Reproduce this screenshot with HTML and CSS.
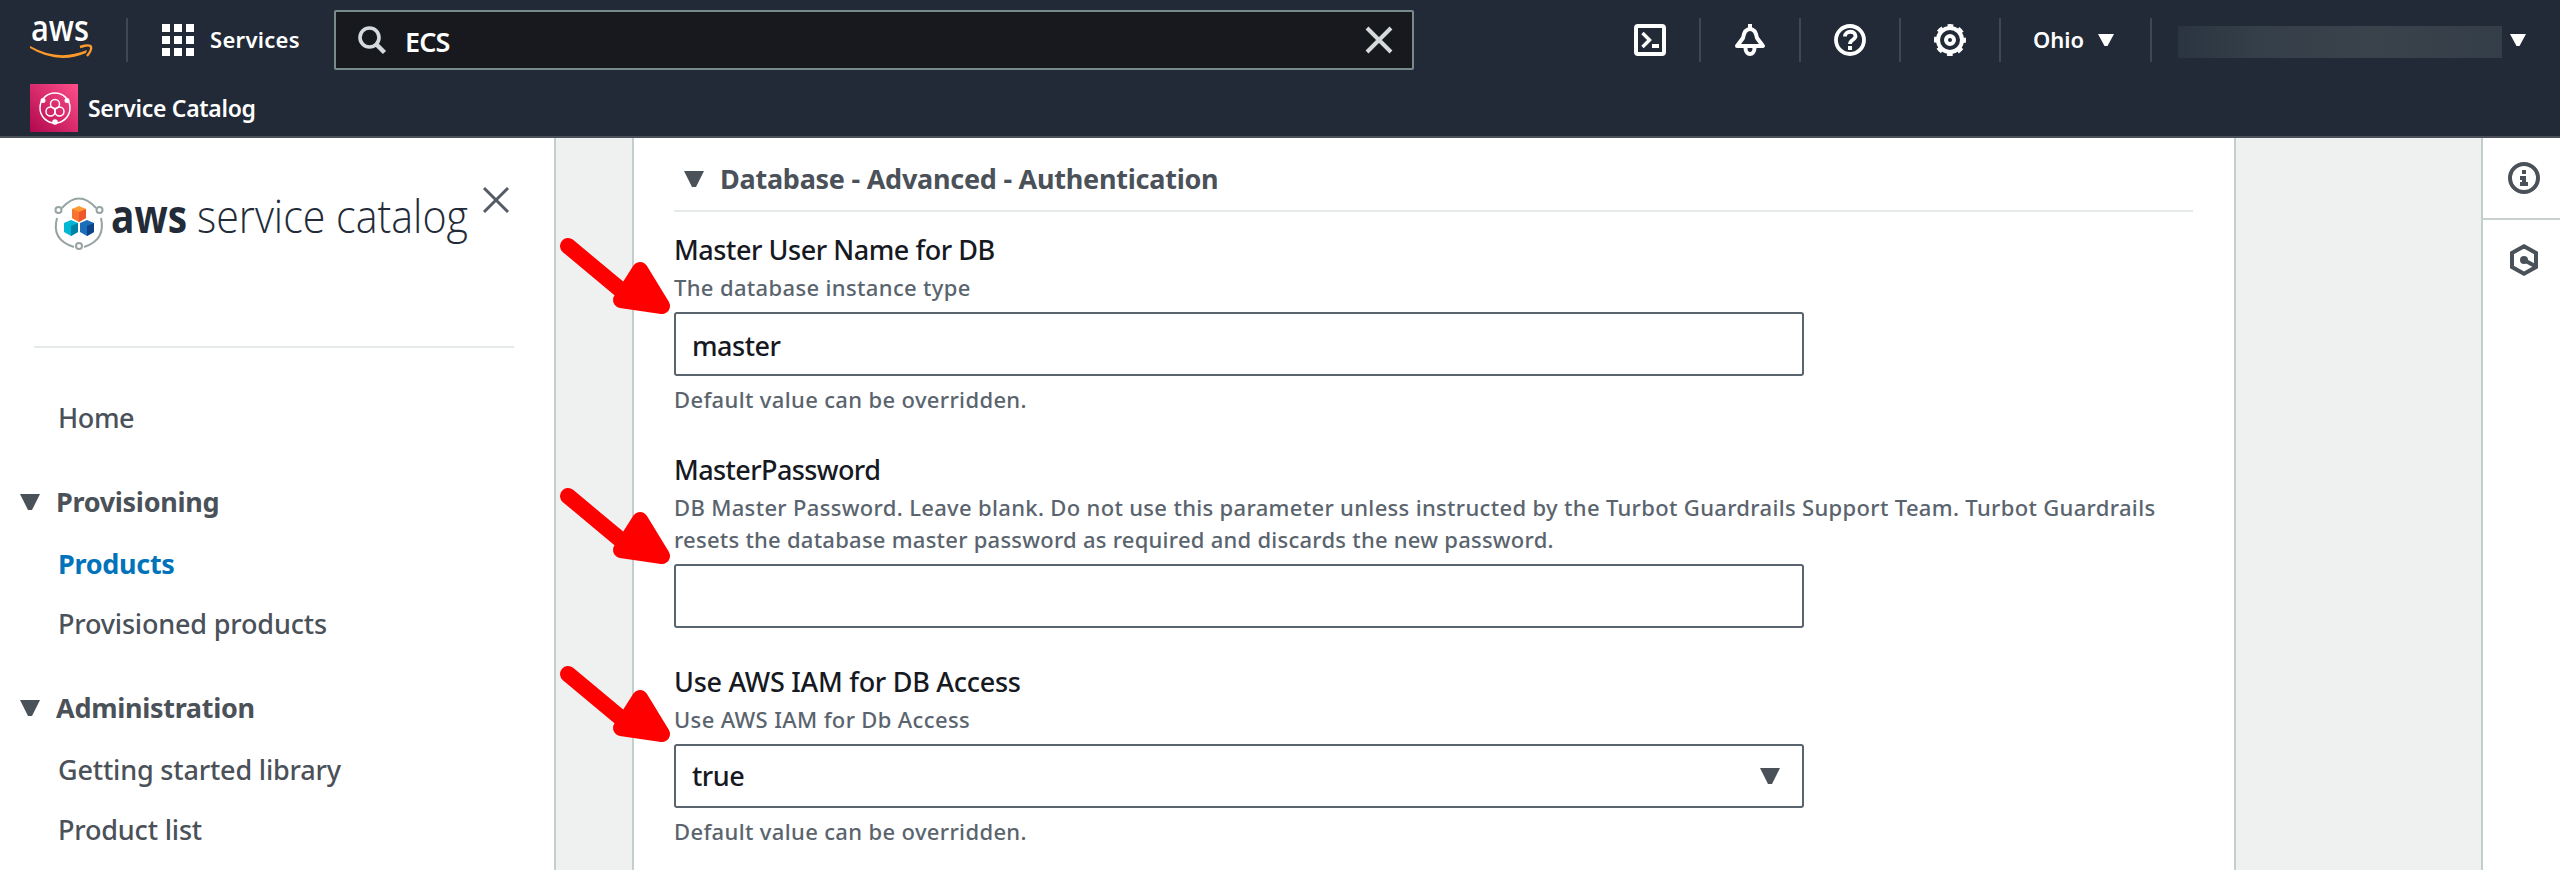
FILE: index.html
```html
<!DOCTYPE html>
<html lang="en">
<head>
<meta charset="utf-8">
<title>Service Catalog</title>
<link rel="stylesheet" href="styles.css">
</head>
<body>
<header class="top">
  <div class="bar">
    <svg class="aws" viewBox="0 0 62 40"><text class="aws-word" x="1" y="21" textLength="58" lengthAdjust="spacingAndGlyphs">aws</text><path d="M0 26Q28 42 57 30L56 33Q28 45 0 28z" fill="#ff9a2b"/><path d="M50 27q10-3 11 0t-4 9" fill="none" stroke="#ff9a2b" stroke-width="2.400"/></svg>
    <i class="sep sep-logo"></i>
    <svg class="grid" viewBox="0 0 32 32" fill="#fff"><path d="M0 0h8v8H0zM12 0h8v8h-8zM24 0h8v8h-8zM0 12h8v8H0zM12 12h8v8h-8zM24 12h8v8h-8zM0 24h8v8H0zM12 24h8v8h-8zM24 24h8v8h-8z"/></svg>
    <span class="services">Services</span>
    <div class="search">
      <svg class="glass" viewBox="0 0 28 28" fill="none" stroke="#d5dbdb" stroke-width="3.600"><circle cx="11.500" cy="11.500" r="9.500"/><path d="M18 18l8.500 8.500" stroke-width="4.500"/></svg>
      <span class="query">ECS</span>
      <svg class="clear" viewBox="0 0 26 26" fill="none" stroke="#d5dbdb" stroke-width="4"><path d="M1 1l24 24M25 1L1 25"/></svg>
    </div>
    <div class="tools">
      <svg class="ico" viewBox="0 0 32 32" fill="none" stroke="#fff" stroke-width="4"><rect x="2" y="2" width="28" height="28" rx="2"/><path d="M8.500 9l7 7-7 7" stroke-width="3.400"/><path d="M18 22h7" /></svg>
      <i class="sep"></i>
      <svg class="ico" viewBox="0 0 32 32" fill="none" stroke="#fff" stroke-width="4"><path d="M16 0v4M3 22L9 14C11 2 21 2 23 14l6 8z" stroke-linejoin="round"/><path d="M11.500 24c0 8 9 8 9 0"/></svg>
      <i class="sep"></i>
      <svg class="ico" viewBox="0 0 32 32" fill="none" stroke="#fff" stroke-width="3.800"><circle cx="16" cy="16" r="14"/><path d="M11 12.500c0-6.500 10.500-6 10.500-.5 0 4-5.500 3.500-5.500 8"/><path d="M16 22v4" stroke-width="4"/></svg>
      <i class="sep"></i>
      <svg class="ico" viewBox="0 0 32 32" fill="none" stroke="#fff"><circle cx="16" cy="16" r="12" stroke-width="4"/><circle cx="16" cy="16" r="14.500" stroke-width="3" stroke-dasharray="5.700 5.690" stroke-dashoffset="2.850"/><circle cx="16" cy="16" r="4" stroke-width="4"/></svg>
      <i class="sep"></i>
      <span class="region">Ohio</span>
      <svg class="caret" viewBox="0 0 16 12"><path d="M0 0h16L9.500 12h-3z" fill="#fff"/></svg>
      <i class="sep"></i>
      <span class="account"></span>
      <svg class="caret" viewBox="0 0 16 12"><path d="M0 0h16L9.500 12h-3z" fill="#fff"/></svg>
    </div>
  </div>
  <div class="favs">
    <svg class="tile" viewBox="0 0 48 48"><defs><linearGradient id="pink" x1="0" y1="1" x2="1" y2="0"><stop offset="0" stop-color="#b0084d"/><stop offset="1" stop-color="#ff4f8b"/></linearGradient></defs><rect width="48" height="48" fill="url(#pink)"/><g fill="none" stroke="#fff" stroke-width="1.500"><circle cx="25" cy="24" r="15"/><circle cx="25" cy="20" r="4.500"/><circle cx="20.500" cy="27.500" r="4.500"/><circle cx="29.500" cy="27.500" r="4.500"/></g><g fill="#fff"><circle cx="13" cy="16.500" r="2.500"/><circle cx="37" cy="16.500" r="2.500"/><circle cx="25" cy="38" r="2.800"/></g></svg>
    <span class="fav">Service Catalog</span>
  </div>
</header>
<div class="page">
  <nav class="side">
    <div class="brand">
      <svg class="brand-logo" viewBox="0 0 420 60">
        <g fill="none" stroke="#97a2a3" stroke-width="2"><path d="M8 10Q25-9 42 10M47 20Q52 42 30 49M20 49Q-3 42 3 20"/><circle cx="4.500" cy="12" r="3"/><circle cx="45.500" cy="12" r="3"/><circle cx="25" cy="48" r="3"/></g>
        <path d="M25 8l7 3v9l-7 4-7-4v-9z" fill="#ff9933"/><path d="M25 14l7-3v9l-7 4z" fill="#f0562b"/><path d="M18 11l7 3v10l-7-4z" fill="#f87430"/>
        <path d="M17 22l7 3v9l-7 4-7-4v-9z" fill="#00b8d4"/><path d="M17 28l7-3v9l-7 4z" fill="#0081a8"/>
        <path d="M33 22l7 3v9l-7 4-7-4v-9z" fill="#1a6fb8"/><path d="M33 28l7-3v9l-7 4z" fill="#0c4389"/>
        <text class="brand-bold" x="57" y="35" textLength="76" lengthAdjust="spacingAndGlyphs">aws</text>
        <text class="brand-thin" x="143" y="35" textLength="271" lengthAdjust="spacingAndGlyphs">service catalog</text>
      </svg>
      <svg class="close" viewBox="0 0 26 26" fill="none" stroke="#545b64" stroke-width="3"><path d="M1 1l24 24M25 1L1 25"/></svg>
    </div>
    <ul class="links">
      <li class="link home">Home</li>
      <li class="group"><svg class="tri" viewBox="0 0 20 16"><path d="M0 0h20l-8 16H8z" fill="#4a5159"/></svg>Provisioning</li>
      <li class="link on">Products</li>
      <li class="link wide">Provisioned products</li>
      <li class="group"><svg class="tri" viewBox="0 0 20 16"><path d="M0 0h20l-8 16H8z" fill="#4a5159"/></svg>Administration</li>
      <li class="link wide">Getting started library</li>
      <li class="link wide">Product list</li>
    </ul>
  </nav>
  <main class="main">
    <section class="panel">
      <h2 class="title"><svg class="tri" viewBox="0 0 20 16"><path d="M0 0h20l-8 16H8z" fill="#4a5159"/></svg>Database - Advanced - Authentication</h2>
      <div class="field f1">
        <svg class="arrow" viewBox="0 0 112 78"><use href="#arrow-shape"/></svg>
        <div class="label">Master User Name for DB</div>
        <div class="hint">The database instance type</div>
        <div class="input">master</div>
        <div class="hint note">Default value can be overridden.</div>
      </div>
      <div class="field f2">
        <svg class="arrow" viewBox="0 0 112 78"><use href="#arrow-shape"/></svg>
        <div class="label l-pass">MasterPassword</div>
        <div class="hint h-pass">DB Master Password. Leave blank. Do not use this parameter unless instructed by the Turbot Guardrails Support Team. Turbot Guardrails<br><span class="line2">resets the database master password as required and discards the new password.</span></div>
        <div class="input"></div>
      </div>
      <div class="field f3">
        <svg class="arrow" viewBox="0 0 112 78"><defs><g id="arrow-shape" fill="#f00"><path d="M8 8L68 58" stroke="#f00" stroke-width="16" stroke-linecap="round"/><path d="M80 32L102 68 61 62z" stroke="#f00" stroke-width="16" stroke-linejoin="round"/></g></defs><use href="#arrow-shape"/></svg>
        <div class="label l-iam">Use AWS IAM for DB Access</div>
        <div class="hint">Use AWS IAM for Db Access</div>
        <div class="input select">true<svg class="tri" viewBox="0 0 20 16"><path d="M0 0h20l-8 16H8z" fill="#4a5159"/></svg></div>
        <div class="hint note">Default value can be overridden.</div>
      </div>
    </section>
  </main>
  <aside class="rail">
    <div class="rail-cell"><svg class="ico" viewBox="0 0 32 32" fill="none" stroke="#4a5159" stroke-width="4"><circle cx="16" cy="16" r="14"/><path d="M16 8v4M12 16h4v6M12 22h8"/></svg></div>
    <div class="rail-cell last"><svg class="ico" viewBox="0 0 32 32" fill="none" stroke="#4a5159" stroke-width="4"><path d="M16 2.300l12 6.700v14l-12 6.700L4 23V9z"/><circle cx="16" cy="16" r="4" fill="#4a5159" stroke="none"/><path d="M16 16l11 6"/></svg></div>
  </aside>
</div>
</body>
</html>
```
FILE: styles.css
```css
* { box-sizing: border-box; }
body { margin: 0; width: 2560px; height: 870px; overflow: hidden; font-family: "Noto Sans", "Open Sans", sans-serif; background: #fff; color: #16191f; font-weight: 500; }
svg { display: block; flex: none; overflow: visible; }
.top { height: 138px; background: #212a36; border-bottom: 2px solid #4b5059; color: #fff; }
.bar { height: 80px; display: flex; align-items: center; padding-left: 30px; }
.aws { width: 62px; height: 40px; }
.aws-word { font: 600 36px "Open Sans", sans-serif; fill: #fff; }
.sep { flex: none; width: 2px; height: 44px; background: #414750; }
.sep-logo { margin: 0 34px; }
.grid { width: 32px; height: 32px; }
.services { width: 124px; padding-left: 16px; font-size: 22px; font-weight: 600; letter-spacing: .3px; margin-top: -3px; }
.search { width: 1080px; height: 60px; margin-left: 16px; border: 2px solid #788a8a; border-radius: 2px; background: #18191e; display: flex; align-items: center; padding: 0 20px 0 22px; }
.glass { width: 28px; height: 28px; }
.query { flex: 1; padding: 2px 0 0 19px; font-size: 27px; font-weight: 600; letter-spacing: -.9px; }
.clear { width: 26px; height: 26px; }
.tools { display: flex; align-items: center; margin-left: 220px; }
.ico { width: 32px; height: 32px; }
.tools .ico { margin-right: 33px; }
.tools .sep + .ico { margin-left: 33px; }
.region { margin: -2px 0 0 32px; width: 65px; font-size: 22px; font-weight: 600; }
.caret { width: 16px; height: 12px; }
.caret + .sep { margin: 0 26px 0 36px; }
.account { width: 324px; height: 32px; margin: 4px 8px 0 0; background: linear-gradient(90deg, #2b3541, #353f49 25%, #3a434c 60%, #343e48); }
.favs { display: flex; align-items: center; padding: 4px 0 0 30px; gap: 10px; }
.tile { width: 48px; height: 48px; }
.fav { font-size: 23px; font-weight: 600; letter-spacing: -.3px; }
.page { display: flex; height: 732px; }
.side { width: 556px; border-right: 2px solid #c6cecd; color: #4a5159; }
.brand { height: 210px; margin: 0 40px 0 34px; border-bottom: 2px solid #e5eae9; display: flex; padding: 60px 0 0 20px; }
.brand-logo { width: 420px; height: 60px; }
.brand-bold { font: 700 47px "Open Sans", sans-serif; fill: #232b38; }
.brand-thin { font: 300 46px "Open Sans", sans-serif; fill: #232b38; }
.close { width: 26px; height: 26px; margin: -11px 0 0 9px; }
.links { list-style: none; margin: 0; padding: 50px 0 0; font-size: 27px; line-height: 40px; }
.link { padding-left: 58px; margin-bottom: 20px; letter-spacing: -.4px; white-space: nowrap; }
.wide { letter-spacing: -.18px; }
.on { color: #0073bb; font-weight: 700; letter-spacing: -.3px; }
.home { margin-bottom: 44px; }
.group { display: flex; align-items: center; gap: 16px; padding-left: 20px; margin-bottom: 22px; font-weight: 700; letter-spacing: -.3px; }
.link + .group { margin-top: 44px; }
.tri { width: 20px; height: 16px; }
.main { flex: 1; background: #eff1f1; padding-left: 76px; }
.panel { width: 1604px; height: 732px; background: #fff; border: solid #c6cecd; border-width: 0 2px; padding: 0 41px 0 40px; }
.title { height: 74px; margin: 0; padding: 13px 0 3px 10px; border-bottom: 2px solid #e5eae9; display: flex; align-items: center; gap: 16px; font-size: 27px; line-height: 36px; color: #4a5159; font-weight: 700; letter-spacing: -.25px; }
.field { position: relative; }
.label { font-size: 27px; line-height: 40px; letter-spacing: -.45px; white-space: nowrap; }
.l-pass { letter-spacing: -.6px; }
.l-iam { letter-spacing: -.27px; }
.hint { margin-top: 1px; font-size: 22px; line-height: 32px; letter-spacing: .35px; color: #5a646e; white-space: nowrap; }
.h-pass { letter-spacing: .33px; }
.line2 { letter-spacing: .25px; }
.input { width: 1130px; height: 64px; border: 2px solid #5a646e; border-radius: 3px; display: flex; align-items: center; justify-content: space-between; padding: 2px 22px 0 16px; font-size: 27px; letter-spacing: -.5px; margin-top: 9px; }
.select { padding: 0 22px 1px 16px; }
.note { margin-top: 7px; }
.f1 { padding-top: 18px; }
.f2 { padding-top: 35px; }
.f3 { padding-top: 34px; }
.arrow { position: absolute; left: -114px; width: 112px; height: 78px; }
.f1 .arrow { top: 26px; }
.f2 .arrow { top: 73px; }
.f3 .arrow { top: 38px; }
.rail { width: 79px; border-left: 2px solid #c6cecd; background: #fff; }
.rail-cell { height: 82px; border-bottom: 2px solid #c9d1d0; display: flex; align-items: center; padding: 0 0 0 25px; }
.last { border: 0; height: 80px; }
```
